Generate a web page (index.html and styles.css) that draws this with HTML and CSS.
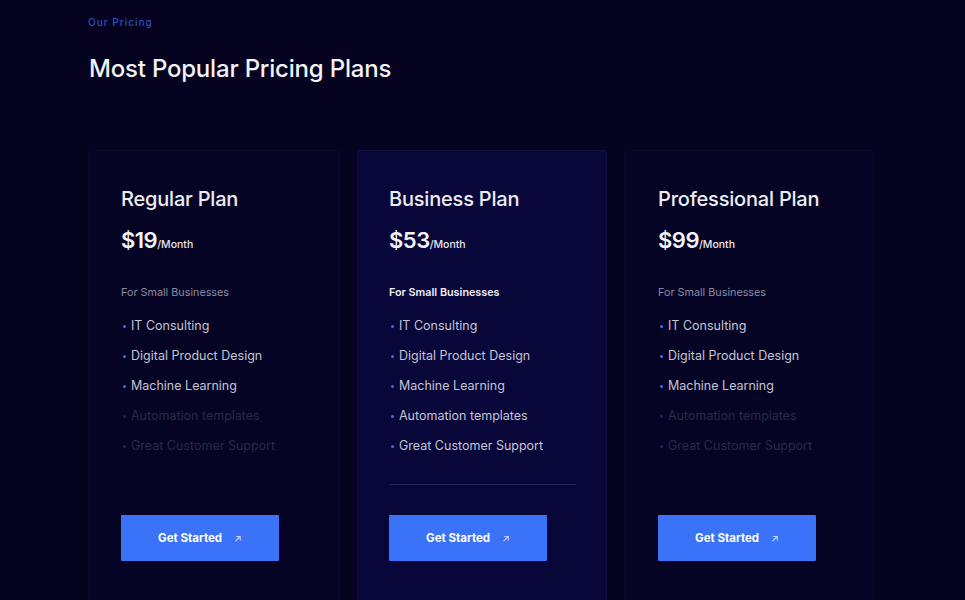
FILE: index.html
```html
<!DOCTYPE html>
<html lang="en">
<head>
<meta charset="utf-8">
<title>Pricing</title>
<link rel="stylesheet" href="styles.css">
</head>
<body>
<section class="pricing">
  <p class="eyebrow">Our Pricing</p>
  <h2 class="title">Most Popular Pricing Plans</h2>
  <div class="plans">
    <div class="plan">
      <h3 class="plan-name">Regular Plan</h3>
      <div class="price"><span class="amount">$19</span><span class="per">/Month</span></div>
      <p class="audience">For Small Businesses</p>
      <ul class="features">
        <li>IT Consulting</li>
        <li>Digital Product Design</li>
        <li>Machine Learning</li>
        <li class="off">Automation templates</li>
        <li class="off">Great Customer Support</li>
      </ul>
      <div class="divider"></div>
      <a class="btn" href="#">Get Started <span class="arrow">&#8599;</span></a>
    </div>
    <div class="plan featured">
      <h3 class="plan-name">Business Plan</h3>
      <div class="price"><span class="amount">$53</span><span class="per">/Month</span></div>
      <p class="audience">For Small Businesses</p>
      <ul class="features">
        <li>IT Consulting</li>
        <li>Digital Product Design</li>
        <li>Machine Learning</li>
        <li>Automation templates</li>
        <li>Great Customer Support</li>
      </ul>
      <div class="divider"></div>
      <a class="btn" href="#">Get Started <span class="arrow">&#8599;</span></a>
    </div>
    <div class="plan last">
      <h3 class="plan-name">Professional Plan</h3>
      <div class="price"><span class="amount">$99</span><span class="per">/Month</span></div>
      <p class="audience">For Small Businesses</p>
      <ul class="features">
        <li>IT Consulting</li>
        <li>Digital Product Design</li>
        <li>Machine Learning</li>
        <li class="off">Automation templates</li>
        <li class="off">Great Customer Support</li>
      </ul>
      <div class="divider"></div>
      <a class="btn" href="#">Get Started <span class="arrow">&#8599;</span></a>
    </div>
  </div>
</section>
</body>
</html>
```

FILE: styles.css
```css
* { box-sizing: border-box; }
html, body {
  margin: 0;
  padding: 0;
  background: #050320;
  height: 100%;
  overflow: hidden;
}
body {
  font-family: Inter, "Noto Sans", sans-serif;
  color: #ffffff;
}
.pricing {
  padding: 15px 0 0 88px;
  width: 965px;
}
.eyebrow {
  margin: 0;
  font-size: 10px;
  line-height: 14px;
  letter-spacing: 1px;
  color: #2d4fb8;
  font-weight: 500;
}
.title {
  margin: 26px 0 0 1px;
  font-size: 24px;
  line-height: 28px;
  font-weight: 500;
  color: #f2f2f7;
  letter-spacing: -0.2px;
}
.plans {
  margin-top: 67px;
  display: grid;
  grid-template-columns: 252px 250px 250px;
  column-gap: 17px;
}
.plan {
  padding: 36px 32px 60px 32px;
  background: #060425;
  border: 1px solid rgba(255,255,255,0.025);
  border-radius: 4px;
  height: 480px;
}
.plan.featured {
  background: #090639;
  border-color: rgba(255,255,255,0.03);
  padding-left: 31px;
}
.plan.last {
  padding-left: 33px;
}
.plan-name {
  margin: 0;
  font-size: 20px;
  line-height: 24px;
  font-weight: 500;
  color: #ececf3;
  letter-spacing: -0.2px;
}
.price {
  margin-top: 15px;
  line-height: 28px;
  display: flex;
  align-items: baseline;
}
.amount {
  font-size: 22px;
  font-weight: 600;
  color: #f4f4f8;
  letter-spacing: -0.5px;
}
.per {
  font-size: 10.5px;
  font-weight: 500;
  color: #e6e6ee;
}
.audience {
  margin: 26px 0 0;
  font-size: 10.8px;
  line-height: 16px;
  color: #8a8aa2;
}
.featured .audience {
  color: #eeeef5;
  font-weight: 600;
}
.features {
  list-style: none;
  margin: 15px 0 0;
  padding: 0;
  display: flex;
  flex-direction: column;
  gap: 10px;
}
.features li {
  display: flex;
  align-items: center;
  gap: 5px;
  font-size: 12.5px;
  line-height: 20px;
  color: #c4c4d4;
}
.features li::before {
  content: "";
  width: 3px;
  height: 3px;
  border-radius: 50%;
  background: #3d6bf5;
  margin-left: 2px;
}
.features li.off {
  color: #2a2946;
}
.features li.off::before {
  background: #1c2260;
}
.divider {
  margin-top: 28px;
  height: 1px;
  width: 187px;
  background: transparent;
}
.featured .divider {
  background: #23224a;
}
.btn {
  margin-top: 30px;
  display: flex;
  align-items: center;
  justify-content: center;
  gap: 12px;
  width: 158px;
  height: 46px;
  background: #3a72f8;
  color: #ffffff;
  text-decoration: none;
  font-size: 11.5px;
  font-weight: 700;
  border-radius: 1px;
}
.arrow {
  font-size: 10px;
  font-weight: 400;
  opacity: 0.8;
}
```
